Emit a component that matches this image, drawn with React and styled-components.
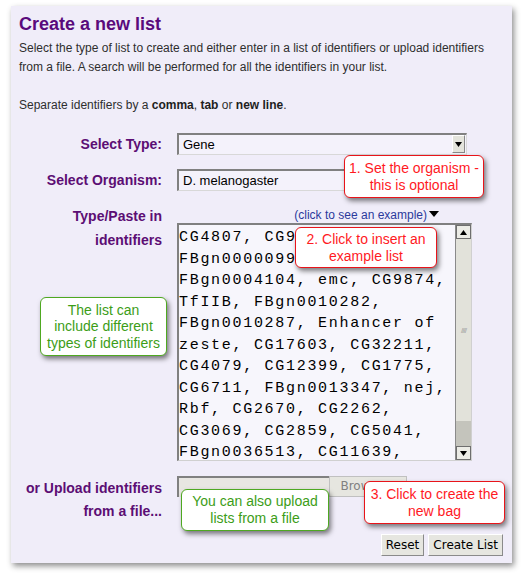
import React from 'react';
import styled, { createGlobalStyle } from 'styled-components';

const GlobalStyle = createGlobalStyle`
	html, body {
		margin: 0;
		padding: 0;
		background: #ffffff;
	}
	body {
		font-family: "Liberation Sans", Arial, sans-serif;
	}
`;

const Page = styled.div`
	width: 524px;
	height: 578px;
	padding: 6px 0 0 11px;
	box-sizing: border-box;
`;

const Panel = styled.div`
	position: relative;
	width: 501px;
	height: 557px;
	box-sizing: border-box;
	padding: 6px 8px 0 8px;
	background-color: #f0edf9;
	box-shadow: 2px 3px 6px rgba(0, 0, 0, 0.45);
`;

const Title = styled.h2`
	margin: 0;
	font-size: 18px;
	line-height: 24px;
	font-weight: bold;
	color: #5a0a7c;
`;

const Intro = styled.p`
	margin: 3px 0 0 0;
	font-size: 12px;
	line-height: 19px;
	color: #2e2e2e;

	b {
		color: #1e1e1e;
	}
`;

const Form = styled.div`
	display: flex;
	flex-direction: column;
	margin-top: 18px;
`;

const Row = styled.div`
	display: grid;
	grid-template-columns: 143px 1fr;
	column-gap: 15px;
	margin-top: ${(p) => p.$gap || 0}px;
	align-items: ${(p) => p.$align || 'start'};
`;

const Label = styled.div`
	text-align: right;
	font-size: 14px;
	font-weight: bold;
	color: #5c0e74;
	line-height: ${(p) => p.$lh || 22}px;
	margin-top: ${(p) => p.$offset || 0}px;
`;

const SelectBox = styled.div`
	position: relative;
	width: 290px;
	height: 22px;
	box-sizing: border-box;
	border-top: 2px solid #808080;
	border-left: 2px solid #808080;
	border-right: 1px solid #d8d8d8;
	border-bottom: 1px solid #d8d8d8;
	background: #f4f2fb;
	font-size: 13px;
	line-height: 19px;
	padding-left: 4px;
	color: #000;
	font-family: "Liberation Sans", Arial, sans-serif;
`;

const DropButton = styled.div`
	position: absolute;
	right: 1px;
	top: 0;
	width: 13px;
	height: 18px;
	background: #e4e4dc;
	border-left: 1px solid #ffffff;
	border-top: 1px solid #ffffff;
	border-right: 1px solid #888;
	border-bottom: 1px solid #888;
	box-sizing: border-box;
	display: flex;
	align-items: center;
	justify-content: center;
`;

const Arrow = ({ up }) => (
	<svg width="7" height="5" viewBox="0 0 7 5">
		{up ? <polygon points="0,5 7,5 3.5,0" fill="#000" /> : <polygon points="0,0 7,0 3.5,5" fill="#000" />}
	</svg>
);

const IdColumn = styled.div`
	width: 295px;
`;

const ExampleLink = styled.div`
	text-align: right;
	padding-right: 33px;
	font-size: 12px;
	line-height: 15px;
	color: #2b3a9c;

	svg {
		margin-left: 2px;
		vertical-align: 2px;
	}
`;

const TextArea = styled.div`
	position: relative;
	width: 295px;
	height: 238px;
	box-sizing: border-box;
	border-top: 2px solid #808080;
	border-left: 2px solid #808080;
	border-right: 1px solid #d0d0d0;
	border-bottom: 1px solid #d0d0d0;
	background: #f7f6fc;
	overflow: hidden;
`;

const IdText = styled.pre`
	margin: 0;
	padding: 2px 0 0 0;
	font-family: "Liberation Mono", "Courier New", monospace;
	font-size: 15px;
	letter-spacing: 1.7px;
	line-height: 21.5px;
	color: #000;
`;

const Scrollbar = styled.div`
	position: absolute;
	right: 0;
	top: 0;
	bottom: 0;
	width: 15px;
	display: flex;
	flex-direction: column;
	background: #c4c4bc;
	border-left: 1px solid #8a8a8a;
`;

const ScrollArrow = styled.div`
	height: 14px;
	background: #ecece6;
	border: 1px solid #6e6e6e;
	box-sizing: border-box;
	display: flex;
	align-items: center;
	justify-content: center;
`;

const Thumb = styled.div`
	height: 182px;
	background: #e2e2da;
	display: flex;
	align-items: center;
	justify-content: center;
	color: #a0a0a0;
	font-size: 8px;
	letter-spacing: -1px;
`;

const Track = styled.div`
	flex: 1;
`;

const FileRow = styled.div`
	display: flex;
	width: 230px;
	height: 21px;
`;

const FileField = styled.div`
	width: 152px;
	box-sizing: border-box;
	border-top: 2px solid #808080;
	border-left: 2px solid #808080;
	background: #e8e6e2;
`;

const BrowseButton = styled.div`
	flex: 1;
	box-sizing: border-box;
	background: #e6e6e0;
	border: 1px solid #c0c0c0;
	font-family: "DejaVu Sans", sans-serif;
	font-size: 12px;
	line-height: 19px;
	color: #808080;
	text-align: center;
`;

const Actions = styled.div`
	display: flex;
	justify-content: flex-end;
	gap: 4px;
	margin-top: 11px;
	padding-right: 1px;
`;

const Button = styled.button`
	height: 22px;
	padding: 0 4px;
	background: #e6e6e0;
	border: 1px solid #ffffff;
	border-right-color: #8a8a8a;
	border-bottom-color: #8a8a8a;
	font-family: "DejaVu Sans", sans-serif;
	font-size: 12px;
	color: #000;
	cursor: pointer;
`;

const Callout = styled.div`
	position: absolute;
	left: ${(p) => p.$x}px;
	top: ${(p) => p.$y}px;
	width: ${(p) => p.$w}px;
	height: ${(p) => p.$h}px;
	box-sizing: border-box;
	display: flex;
	align-items: center;
	justify-content: center;
	text-align: center;
	background: #ffffff;
	border: 1px solid ${(p) => (p.$green ? '#4ea821' : '#e8141a')};
	border-radius: 6px;
	color: ${(p) => (p.$green ? '#3c9d17' : '#ff1a1f')};
	font-size: 14px;
	line-height: ${(p) => p.$lh || 17}px;
	box-shadow: 2px 3px 5px rgba(0, 0, 0, 0.5);
`;

const ids = [
	'CG4807, CG9188, CG10040,',
	'FBgn0000099, CG13399,',
	'FBgn0004104, emc, CG9874,',
	'TfIIB, FBgn0010282,',
	'FBgn0010287, Enhancer of',
	'zeste, CG17603, CG32211,',
	'CG4079, CG12399, CG1775,',
	'CG6711, FBgn0013347, nej,',
	'Rbf, CG2670, CG2262,',
	'CG3069, CG2859, CG5041,',
	'FBgn0036513, CG11639,',
];

const App = () => {
	return (
		<Page>
			<GlobalStyle />
			<Panel>
				<Title>Create a new list</Title>
				<Intro>
					Select the type of list to create and either enter in a list of identifiers or upload identifiers from a file. A search will be performed for all the identifiers in your list.
					<br />
					<br />
					Separate identifiers by a <b>comma</b>, <b>tab</b> or <b>new line</b>.
				</Intro>

				<Form>
					<Row $align="center">
						<Label>Select Type:</Label>
						<SelectBox>
							Gene
							<DropButton>
								<Arrow />
							</DropButton>
						</SelectBox>
					</Row>

					<Row $gap={14} $align="center">
						<Label>Select Organism:</Label>
						<SelectBox>D. melanogaster</SelectBox>
					</Row>

					<Row $gap={17}>
						<Label $lh={24} $offset={-4}>
							Type/Paste in
							<br />
							identifiers
						</Label>
						<IdColumn>
							<ExampleLink>
								(click to see an example)
								<svg width="10" height="6" viewBox="0 0 10 6">
									<polygon points="0,0 10,0 5,6" fill="#000" />
								</svg>
							</ExampleLink>
							<TextArea>
								<IdText>{ids.join('\n')}</IdText>
								<Scrollbar>
									<ScrollArrow>
										<Arrow up />
									</ScrollArrow>
									<Thumb>////</Thumb>
									<Track />
									<ScrollArrow>
										<Arrow />
									</ScrollArrow>
								</Scrollbar>
							</TextArea>
						</IdColumn>
					</Row>

					<Row $gap={15}>
						<Label $lh={23} $offset={1}>
							or Upload identifiers
							<br />
							from a file...
						</Label>
						<FileRow>
							<FileField />
							<BrowseButton>Browse...</BrowseButton>
						</FileRow>
					</Row>

					<Actions>
						<Button>Reset</Button>
						<Button>Create List</Button>
					</Actions>
				</Form>

				<Callout $x={333} $y={149} $w={140} $h={43}>
					1. Set the organism -
					<br />
					this is optional
				</Callout>
				<Callout $x={284} $y={221} $w={142} $h={41}>
					2. Click to insert an
					<br />
					example list
				</Callout>
				<Callout $green $x={29} $y={291} $w={127} $h={59} $lh={16.5}>
					The list can
					<br />
					include different
					<br />
					types of identifiers
				</Callout>
				<Callout $green $x={170} $y={483} $w={148} $h={42}>
					You can also upload
					<br />
					lists from a file
				</Callout>
				<Callout $x={353} $y={475} $w={141} $h={43}>
					3. Click to create the
					<br />
					new bag
				</Callout>
			</Panel>
		</Page>
	);
};

export default App;
